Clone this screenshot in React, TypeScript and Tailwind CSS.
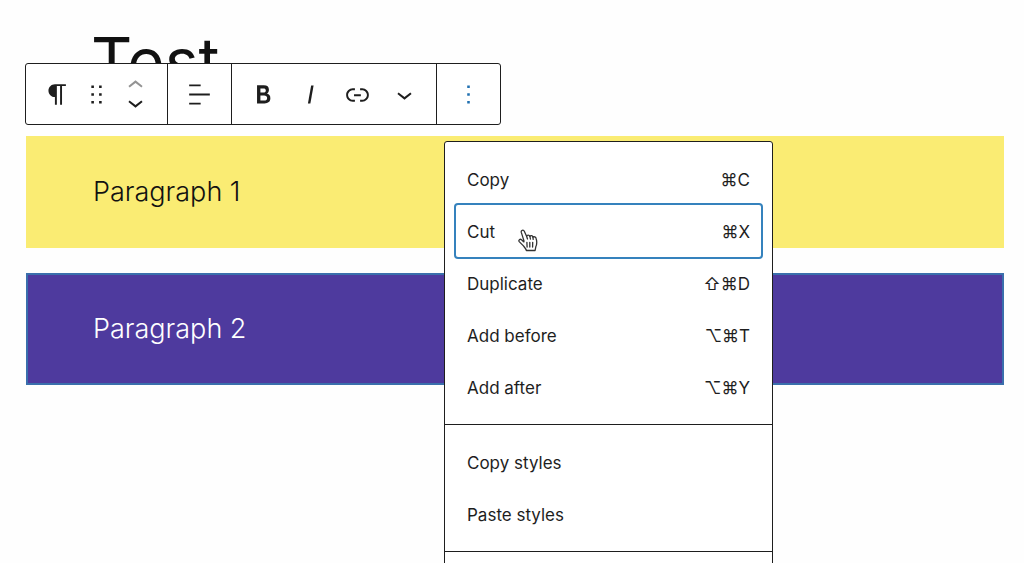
import type { ReactNode } from "react";

type MenuItem = {
  label: string;
  shortcut?: string;
  active?: boolean;
};

const groups: MenuItem[][] = [
  [
    { label: "Copy", shortcut: "⌘C" },
    { label: "Cut", shortcut: "⌘X", active: true },
    { label: "Duplicate", shortcut: "⇧⌘D" },
    { label: "Add before", shortcut: "⌥⌘T" },
    { label: "Add after", shortcut: "⌥⌘Y" },
  ],
  [{ label: "Copy styles" }, { label: "Paste styles" }],
  [],
];

const icons = {
  paragraph:
    "m9.99609 14v-.2251l.00391.0001v6.225h1.5v-14.5h2.5v14.5h1.5v-14.5h3v-1.5h-8.50391c-2.76142 0-5 2.23858-5 5 0 2.7614 2.23858 5 5 5z",
  drag: "M8 7h2V5H8v2zm0 6h2v-2H8v2zm0 6h2v-2H8v2zm6-14v2h2V5h-2zm0 8h2v-2h-2v2zm0 6h2v-2h-2v2z",
  up: "M6.5 12.4L12 8l5.5 4.4-.9 1.2L12 10l-4.5 3.6-1-1.2z",
  down: "M17.5 11.6L12 16l-5.5-4.4.9-1.2L12 14l4.5-3.6 1 1.2z",
  align: "M4 19.8h8.9v-1.5H4v1.5zm8.9-15.6H4v1.5h8.9V4.2zm-8.9 7v1.5h16v-1.5H4z",
  bold: "M14.7 11.3c1-.6 1.5-1.6 1.5-3 0-2.3-1.3-3.4-4-3.4H7v14h5.8c1.4 0 2.5-.3 3.3-1 .8-.7 1.2-1.7 1.2-2.9.1-1.9-.8-3.1-2.6-3.7zm-5.1-4h2.3c.6 0 1.1.1 1.4.4.3.3.5.7.5 1.2s-.2 1-.5 1.2c-.3.3-.8.4-1.4.4H9.6V7.3zm4.6 9c-.4.3-1 .4-1.7.4H9.6v-3.9h2.9c.7 0 1.3.2 1.7.5.4.3.6.8.6 1.5s-.2 1.2-.6 1.5z",
  italic: "M12.5 5L10 19h1.9l2.5-14z",
  link: "M15.6 7.2H14v1.5h1.6c2 0 3.7 1.7 3.7 3.7s-1.7 3.7-3.7 3.7H14v1.5h1.6c2.8 0 5.2-2.3 5.2-5.2 0-2.9-2.3-5.2-5.2-5.2zM4.7 12.4c0-2 1.7-3.7 3.7-3.7H10V7.2H8.4c-2.9 0-5.2 2.3-5.2 5.2 0 2.9 2.3 5.2 5.2 5.2H10v-1.5H8.4c-2 0-3.7-1.7-3.7-3.7zm4.6.9h5.3v-1.5H9.3v1.5z",
  more: "M13 19h-2v-2h2v2zm0-6h-2v-2h2v2zm0-6h-2V5h2v2z",
};

function Icon({ name }: { name: keyof typeof icons }) {
  return (
    <svg viewBox="0 0 24 24" className="size-[31px] shrink-0 fill-current" aria-hidden="true">
      <path d={icons[name]} />
    </svg>
  );
}

function ToolButton({ name, label }: { name: keyof typeof icons; label: string }) {
  return (
    <button type="button" aria-label={label} className="flex w-[47px] items-center justify-center">
      <Icon name={name} />
    </button>
  );
}

function ToolGroup({ children }: { children: ReactNode }) {
  return <div className="flex px-2">{children}</div>;
}

function Toolbar() {
  return (
    <div
      role="toolbar"
      aria-label="Block tools"
      className="absolute top-[63px] left-[25px] flex h-[62px] divide-x divide-[#1e1e1e] rounded-[3px] border border-[#1e1e1e] bg-white text-[#1e1e1e]"
    >
      <ToolGroup>
        <ToolButton name="paragraph" label="Paragraph" />
        <button type="button" aria-label="Drag" className="flex items-center">
          <Icon name="drag" />
        </button>
        <div className="flex w-[47px] flex-col justify-center">
          <button
            type="button"
            aria-label="Move up"
            disabled
            className="flex h-[17px] items-center justify-center text-[#949494]"
          >
            <Icon name="up" />
          </button>
          <button
            type="button"
            aria-label="Move down"
            className="flex h-[17px] items-center justify-center"
          >
            <Icon name="down" />
          </button>
        </div>
      </ToolGroup>
      <ToolGroup>
        <ToolButton name="align" label="Align text" />
      </ToolGroup>
      <ToolGroup>
        <ToolButton name="bold" label="Bold" />
        <ToolButton name="italic" label="Italic" />
        <ToolButton name="link" label="Link" />
        <ToolButton name="down" label="More" />
      </ToolGroup>
      <div className="flex px-2 text-[#2271b1]">
        <ToolButton name="more" label="Options" />
      </div>
    </div>
  );
}

// Pointing hand shown over the hovered item
function HandCursor() {
  return (
    <svg
      viewBox="0 0 20 23"
      className="absolute top-6 left-[62px] h-[23px] w-5"
      fill="#fff"
      stroke="#333"
      strokeWidth="1.3"
      strokeLinejoin="round"
      strokeLinecap="round"
      aria-hidden="true"
    >
      <path d="M5.9 11.6L3.3 3.4C2.7 1.3 5.4.3 6.3 2.3L8.6 7.2c.6-1.6 2.7-1.4 3.3.2.6-1.2 2.6-.9 3 .7 1.1-.8 2.9-.1 3.3 1.6.8 2.8.9 5.3-.4 8.1l-.7 3.7H8.4c-.6-2-2-3.2-3.2-4.9L1.2 12.6c-1-1.6.8-3 2.3-1.9l2.4 2.2z" />
      <path d="M8.9 13.3l.2 4.7M11.8 13.3v4.7M14.7 13.3l-.1 4.7M8.6 7.2l.9 2.8M11.9 7.4l.5 2.6M14.9 8.1l.3 2.2" />
    </svg>
  );
}

function OptionsMenu() {
  return (
    <div
      role="menu"
      className="absolute top-[141px] left-[444px] w-[329px] divide-y divide-[#1e1e1e] rounded-[3px] border border-[#1e1e1e] bg-white text-[#1e1e1e]"
    >
      {groups.map((items, i) => (
        <div key={i} role="group" className="p-[11px]">
          {items.map((item) => (
            <button
              key={item.label}
              type="button"
              role="menuitem"
              className={
                "relative flex h-[52px] w-full items-center justify-between rounded-[2px] px-[11px] pt-1 text-[17px] " +
                (item.active ? "ring-2 ring-[#3582bd]" : "")
              }
            >
              <span>{item.label}</span>
              {item.shortcut && <span>{item.shortcut}</span>}
              {item.active && <HandCursor />}
            </button>
          ))}
        </div>
      ))}
    </div>
  );
}

export default function App() {
  return (
    <div className="relative h-screen overflow-hidden bg-[#fefefe] font-['Inter',sans-serif]">
      <main className="flex flex-col gap-[25px] pt-[31px] pr-5 pl-[26px]">
        <h1 className="h-20 px-[65px] text-[64px] leading-[60px] text-[#111]">Test</h1>
        <p className="flex h-28 items-center bg-[#faec73] px-[67px] text-[27px] font-light text-[#111]">
          Paragraph 1
        </p>
        <p className="flex h-28 items-center border-2 border-[#3a6fac] bg-[#4e3a9e] px-[65px] text-[27px] font-light text-white">
          Paragraph 2
        </p>
      </main>
      <Toolbar />
      <OptionsMenu />
    </div>
  );
}
